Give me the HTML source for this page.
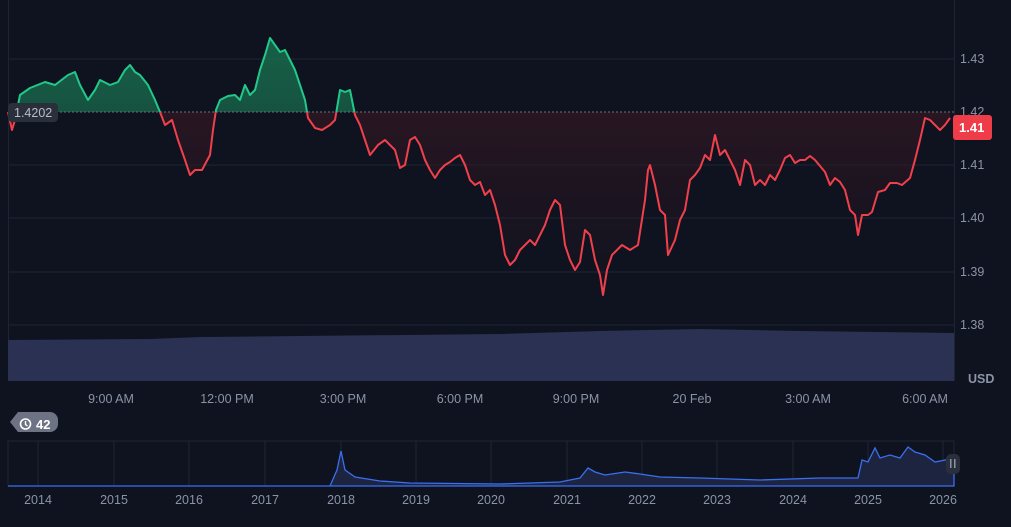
<!DOCTYPE html><html><head><style>
body{margin:0;background:#0e131f;width:1011px;height:527px;overflow:hidden;font-family:"Liberation Sans",sans-serif}
svg{display:block}
svg text{font-family:"Liberation Sans",sans-serif;fill:#8b93a7;font-size:12.5px}
</style></head><body>
<svg width="1011" height="527" viewBox="0 0 1011 527" xmlns="http://www.w3.org/2000/svg" xmlns:xlink="http://www.w3.org/1999/xlink">
<defs>
<linearGradient id="g" x1="0" y1="0" x2="0" y2="1"><stop offset="0" stop-color="#1b7a55" stop-opacity=".75"/><stop offset="1" stop-color="#15503e" stop-opacity=".6"/></linearGradient>
<linearGradient id="r" gradientUnits="userSpaceOnUse" x1="0" y1="112" x2="0" y2="295"><stop offset="0" stop-color="#3a1824" stop-opacity=".6"/><stop offset="1" stop-color="#2a1520" stop-opacity=".1"/></linearGradient>
<clipPath id="top"><rect x="0" y="0" width="960" height="112"/></clipPath>
<clipPath id="bot"><rect x="0" y="112" width="960" height="300"/></clipPath>
<polygon id="area" points="8,112 12,130 15,120 20,95 30,88 45,82 55,85 68,75 75,72 80,85 88,100 95,90 100,80 110,85 118,82 125,70 130,65 135,72 140,75 148,85 155,100 160,112 165,125 172,120 178,140 185,160 190,175 195,170 202,170 210,155 213,130 216,110 220,100 228,96 235,95 240,100 245,85 250,95 255,90 260,70 265,55 270,38 275,45 280,52 285,50 290,60 295,70 300,85 305,100 308,118 315,128 322,130 330,125 335,120 340,90 345,92 350,90 355,115 360,125 365,140 370,155 378,145 385,140 390,145 395,150 400,168 405,165 410,140 415,137 420,145 425,160 430,170 435,178 440,170 445,165 450,162 455,158 460,155 465,165 470,180 475,185 480,182 485,195 490,190 495,205 500,225 505,255 510,265 515,260 520,250 525,245 530,240 535,245 540,235 545,225 550,210 555,200 560,205 565,245 570,260 575,270 580,262 585,230 590,235 595,260 600,275 603,295 607,270 612,255 617,250 622,245 630,250 638,245 645,200 648,170 650,165 655,185 660,210 665,215 668,255 675,240 680,220 685,210 690,180 695,175 700,168 705,155 710,160 715,135 720,155 725,150 730,160 735,170 740,185 745,160 750,165 755,185 760,180 765,185 770,175 775,180 780,170 785,158 790,155 795,163 800,160 805,160 810,156 815,160 820,166 825,172 830,185 835,178 840,182 845,190 850,210 855,215 858,235 862,215 868,215 872,212 878,192 885,190 890,183 897,183 902,185 910,178 915,160 920,140 925,118 930,120 935,125 940,130 945,125 950,118 950,112"/>
<polyline id="pl" points="8,112 12,130 15,120 20,95 30,88 45,82 55,85 68,75 75,72 80,85 88,100 95,90 100,80 110,85 118,82 125,70 130,65 135,72 140,75 148,85 155,100 160,112 165,125 172,120 178,140 185,160 190,175 195,170 202,170 210,155 213,130 216,110 220,100 228,96 235,95 240,100 245,85 250,95 255,90 260,70 265,55 270,38 275,45 280,52 285,50 290,60 295,70 300,85 305,100 308,118 315,128 322,130 330,125 335,120 340,90 345,92 350,90 355,115 360,125 365,140 370,155 378,145 385,140 390,145 395,150 400,168 405,165 410,140 415,137 420,145 425,160 430,170 435,178 440,170 445,165 450,162 455,158 460,155 465,165 470,180 475,185 480,182 485,195 490,190 495,205 500,225 505,255 510,265 515,260 520,250 525,245 530,240 535,245 540,235 545,225 550,210 555,200 560,205 565,245 570,260 575,270 580,262 585,230 590,235 595,260 600,275 603,295 607,270 612,255 617,250 622,245 630,250 638,245 645,200 648,170 650,165 655,185 660,210 665,215 668,255 675,240 680,220 685,210 690,180 695,175 700,168 705,155 710,160 715,135 720,155 725,150 730,160 735,170 740,185 745,160 750,165 755,185 760,180 765,185 770,175 775,180 780,170 785,158 790,155 795,163 800,160 805,160 810,156 815,160 820,166 825,172 830,185 835,178 840,182 845,190 850,210 855,215 858,235 862,215 868,215 872,212 878,192 885,190 890,183 897,183 902,185 910,178 915,160 920,140 925,118 930,120 935,125 940,130 945,125 950,118" fill="none" stroke-width="2" stroke-linejoin="round"/>
</defs>
<g stroke="#1e2433" stroke-width="1">
<line x1="8" y1="59" x2="954" y2="59"/><line x1="8" y1="165" x2="954" y2="165"/>
<line x1="8" y1="218" x2="954" y2="218"/><line x1="8" y1="272" x2="954" y2="272"/><line x1="8" y1="325" x2="954" y2="325"/>
<line x1="8.5" y1="0" x2="8.5" y2="381"/><line x1="954.5" y1="0" x2="954.5" y2="381"/>
</g>
<path d="M8 340 L150 339 L200 337 L300 336 L500 334 L600 331 L700 329 L800 331 L954 333 L954 381 L8 381 Z" fill="#2a3152"/>
<g clip-path="url(#top)"><use href="#area" xlink:href="#area" fill="url(#g)"/></g>
<g clip-path="url(#bot)"><use href="#area" xlink:href="#area" fill="url(#r)"/></g>
<line x1="8" y1="112" x2="954" y2="112" stroke="#6a7080" stroke-dasharray="2 2"/>
<g clip-path="url(#top)"><use href="#pl" xlink:href="#pl" stroke="#22c88a"/></g>
<g clip-path="url(#bot)"><use href="#pl" xlink:href="#pl" stroke="#f0404c"/></g>
<rect x="8" y="103" width="50" height="19" rx="4" fill="#2a2f3c"/>
<text x="14" y="117" style="fill:#b8bdc9">1.4202</text>
<text x="960" y="63">1.43</text><text x="960" y="116">1.42</text><text x="960" y="169">1.41</text>
<text x="960" y="222">1.40</text><text x="960" y="276">1.39</text><text x="960" y="329">1.38</text>
<rect x="953" y="115" width="39" height="25" rx="3" fill="#ee3d48"/>
<text x="959" y="132" style="fill:#fff;font-weight:bold;font-size:13px">1.41</text>
<text x="968" y="383" style="font-weight:bold">USD</text>
<g text-anchor="middle"><text x="111" y="403">9:00 AM</text><text x="227" y="403">12:00 PM</text><text x="343" y="403">3:00 PM</text><text x="460" y="403">6:00 PM</text><text x="576" y="403">9:00 PM</text><text x="692" y="403">20 Feb</text><text x="808" y="403">3:00 AM</text><text x="925" y="403">6:00 AM</text></g>
<path d="M18 412 H50 a8 8 0 0 1 8 8 v4 a8 8 0 0 1 -8 8 H18 l-8 -10 Z" fill="#6d7384"/>
<circle cx="25.5" cy="424" r="5" fill="none" stroke="#fff" stroke-width="1.6"/><path d="M25.5 421v3.5l2 1.5" stroke="#fff" stroke-width="1.4" fill="none"/>
<text x="36" y="429" style="fill:#fff;font-weight:bold;font-size:13px">42</text>
<rect x="8" y="441" width="946" height="45" fill="none" stroke="#1e2433"/>
<g stroke="#1e2433"><line x1="38" y1="441" x2="38" y2="486"/><line x1="114" y1="441" x2="114" y2="486"/><line x1="189" y1="441" x2="189" y2="486"/><line x1="265" y1="441" x2="265" y2="486"/><line x1="341" y1="441" x2="341" y2="486"/><line x1="416" y1="441" x2="416" y2="486"/><line x1="491" y1="441" x2="491" y2="486"/><line x1="567" y1="441" x2="567" y2="486"/><line x1="642" y1="441" x2="642" y2="486"/><line x1="717" y1="441" x2="717" y2="486"/><line x1="793" y1="441" x2="793" y2="486"/><line x1="868" y1="441" x2="868" y2="486"/><line x1="943" y1="441" x2="943" y2="486"/></g>
<path d="M8 486 L330 486 L337 470 L341 451 L345 470 L355 477 L380 481 L410 483 L500 484 L560 482 L580 478 L588 468 L595 472 L605 475 L625 472 L640 474 L660 477 L700 478 L760 480 L820 478 L858 478 L862 460 L868 462 L875 448 L880 458 L890 455 L900 458 L908 447 L915 452 L925 455 L935 462 L945 460 L954 458 L954 486 Z" fill="#1d2440" stroke="#3a6ff0" stroke-width="1.3"/>
<rect x="946" y="454" width="14" height="20" rx="5" fill="#2a2f3c"/>
<rect x="950" y="459" width="1.5" height="9" fill="#8b93a7"/><rect x="954" y="459" width="1.5" height="9" fill="#8b93a7"/>
<g text-anchor="middle"><text x="38" y="504">2014</text><text x="114" y="504">2015</text><text x="189" y="504">2016</text><text x="265" y="504">2017</text><text x="341" y="504">2018</text><text x="416" y="504">2019</text><text x="491" y="504">2020</text><text x="567" y="504">2021</text><text x="642" y="504">2022</text><text x="717" y="504">2023</text><text x="793" y="504">2024</text><text x="868" y="504">2025</text><text x="943" y="504">2026</text></g>
</svg>
</body></html>
